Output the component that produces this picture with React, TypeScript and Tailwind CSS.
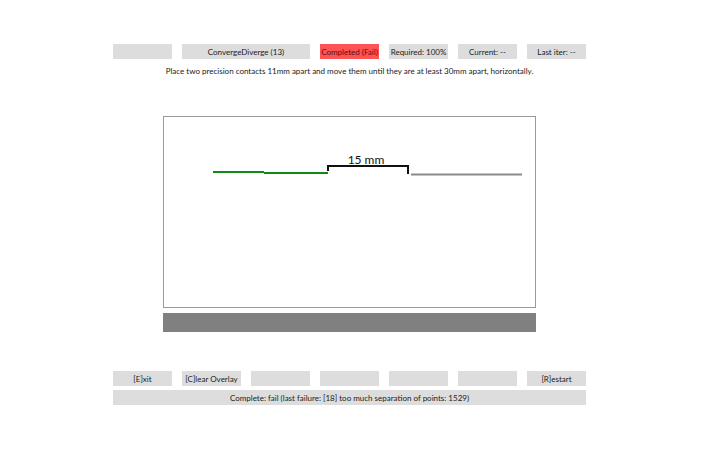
const font = { fontFamily: 'Lato, "Open Sans", sans-serif' }

function Cell({ label, span, tone }: { label?: string; span?: boolean; tone?: 'red' }) {
  return (
    <div
      className={`h-[15px] flex items-center justify-center text-[8px] leading-none whitespace-nowrap ${
        span ? 'col-span-2' : ''
      } ${tone === 'red' ? 'bg-[#ff5252] text-[#5a1010]' : 'bg-[#dddddd] text-[#1a1a1a]'}`}
    >
      {label}
    </div>
  )
}

export default function App() {
  return (
    <div className="w-[718px] h-[467px] bg-white overflow-hidden" style={font}>
      <div className="w-[473px] ml-[113px] pt-[44px] flex flex-col">
        {/* status row */}
        <div className="grid grid-cols-7 gap-x-[10px]">
          <Cell />
          <Cell label="ConvergeDiverge (13)" span />
          <Cell label="Completed (Fail)" tone="red" />
          <Cell label="Required: 100%" />
          <Cell label="Current: --" />
          <Cell label="Last iter: --" />
        </div>

        <p className="mt-[7px] text-center text-[8px] leading-[10px] text-[#1a1a1a] whitespace-nowrap">
          Place two precision contacts 11mm apart and move them until they are at least 30mm apart, horizontally.
        </p>

        {/* drawing area */}
        <div className="mt-[40px] mx-auto w-[373px] h-[192px] border border-[#9a9a9a] bg-white relative">
          <svg width="371" height="190" className="absolute inset-0">
            <line x1="49" y1="55" x2="100" y2="55" stroke="#108a10" strokeWidth="2" />
            <line x1="100" y1="56" x2="164" y2="56" stroke="#108a10" strokeWidth="2" />
            <line x1="163" y1="49" x2="245" y2="49" stroke="#111" strokeWidth="2" />
            <line x1="164" y1="48" x2="164" y2="54" stroke="#111" strokeWidth="2" />
            <line x1="244" y1="48" x2="244" y2="57" stroke="#111" strokeWidth="2" />
            <text x="202" y="47" textAnchor="middle" fontSize="12" fill="#111" style={font}>
              15 mm
            </text>
            <line x1="247" y1="57.5" x2="358" y2="57.5" stroke="#8a8a8a" strokeWidth="2" />
          </svg>
        </div>
        <div className="mt-[5px] mx-auto w-[373px] h-[19px] bg-[#808080]" />

        {/* controls */}
        <div className="mt-[39px] grid grid-cols-7 gap-x-[10px]">
          <Cell label="[E]xit" />
          <Cell label="[C]lear Overlay" />
          <Cell />
          <Cell />
          <Cell />
          <Cell />
          <Cell label="[R]estart" />
        </div>
        <div className="mt-[4px] h-[15px] bg-[#dddddd] flex items-center justify-center text-[8px] leading-none text-[#1a1a1a]">
          Complete: fail (last failure: [18] too much separation of points: 1529)
        </div>
      </div>
    </div>
  )
}
